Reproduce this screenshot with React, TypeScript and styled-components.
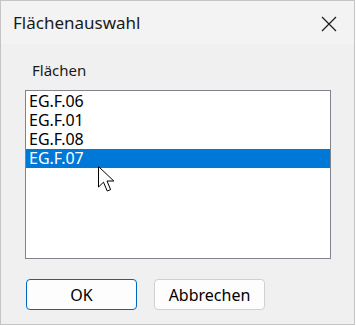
import styled, { createGlobalStyle } from "styled-components";

const GlobalStyle = createGlobalStyle`
  html, body {
    margin: 0;
    padding: 0;
    background: #ffffff;
  }
  body {
    font-family: "Noto Sans", "Open Sans", sans-serif;
    color: #000000;
  }
`;

const ITEMS = ["EG.F.06", "EG.F.01", "EG.F.08", "EG.F.07"];
const SELECTED = 3;

const Window = styled.div`
  position: relative;
  box-sizing: border-box;
  width: 355px;
  height: 325px;
  border: 1px solid #c4c4c4;
  background: #f0f0f0;
  display: flex;
  flex-direction: column;
`;

const TitleBar = styled.div`
  height: 43px;
  background: #f3f3f3;
  display: flex;
  align-items: center;
  justify-content: space-between;
  padding: 0 17px 0 12px;
`;

const Title = styled.span`
  font-size: 17px;
  line-height: 20px;
  color: #1a1a1a;
  margin-top: 1px;
`;

const CloseButton = styled.button`
  border: none;
  background: transparent;
  padding: 0;
  width: 16px;
  height: 16px;
  display: flex;
  margin-top: 2px;
`;

const Body = styled.div`
  flex: 1;
  display: flex;
  flex-direction: column;
  padding: 16px 0 0 24px;
`;

const Label = styled.div`
  font-size: 15px;
  line-height: 20px;
  height: 20px;
  margin-left: 7px;
  color: #1a1a1a;
`;

const ListBox = styled.div`
  box-sizing: border-box;
  margin-top: 10px;
  width: 306px;
  height: 169px;
  border: 1px solid #7f848c;
  background: #ffffff;
  padding-top: 1px;
  display: flex;
  flex-direction: column;
`;

const Row = styled.div<{ selected?: boolean }>`
  height: 19px;
  line-height: 19px;
  font-size: 16px;
  padding-left: 3px;
  background: ${({ selected }) => (selected ? "#0078d7" : "transparent")};
  color: ${({ selected }) => (selected ? "#ffffff" : "#000000")};
`;

const ButtonRow = styled.div`
  display: flex;
  gap: 17px;
  margin: 20px 0 0 1px;
`;

const DialogButton = styled.button<{ primary?: boolean }>`
  box-sizing: border-box;
  width: 111px;
  height: 31px;
  border-radius: 4px;
  border: 1px solid ${({ primary }) => (primary ? "#0067c0" : "#d0d0d0")};
  background: #fdfdfd;
  font-family: "Noto Sans", "Open Sans", sans-serif;
  font-size: 16px;
  color: #000000;
  padding: 0;
`;

const Cursor = styled.svg`
  position: absolute;
  left: 96px;
  top: 164px;
`;

function CloseIcon() {
  return (
    <svg width="16" height="16" viewBox="0 0 16 16">
      <path d="M1 1 L15 15 M15 1 L1 15" stroke="#1a1a1a" strokeWidth="1.2" fill="none" />
    </svg>
  );
}

export default function App() {
  return (
    <>
      <GlobalStyle />
      <Window>
        <TitleBar>
          <Title>Flächenauswahl</Title>
          <CloseButton>
            <CloseIcon />
          </CloseButton>
        </TitleBar>
        <Body>
          <Label>Flächen</Label>
          <ListBox>
            {ITEMS.map((item, index) => (
              <Row key={item} selected={index === SELECTED}>
                {item}
              </Row>
            ))}
          </ListBox>
          <ButtonRow>
            <DialogButton primary>OK</DialogButton>
            <DialogButton>Abbrechen</DialogButton>
          </ButtonRow>
        </Body>
        <Cursor width="20" height="30" viewBox="0 0 20 30">
          <path
            d="M1.5 1.5 L1.5 22 L6.5 17.2 L10.2 26 L13.6 24.6 L10 16 L16.8 16 Z"
            fill="#ffffff"
            stroke="#000000"
            strokeWidth="1"
            strokeLinejoin="miter"
          />
        </Cursor>
      </Window>
    </>
  );
}
